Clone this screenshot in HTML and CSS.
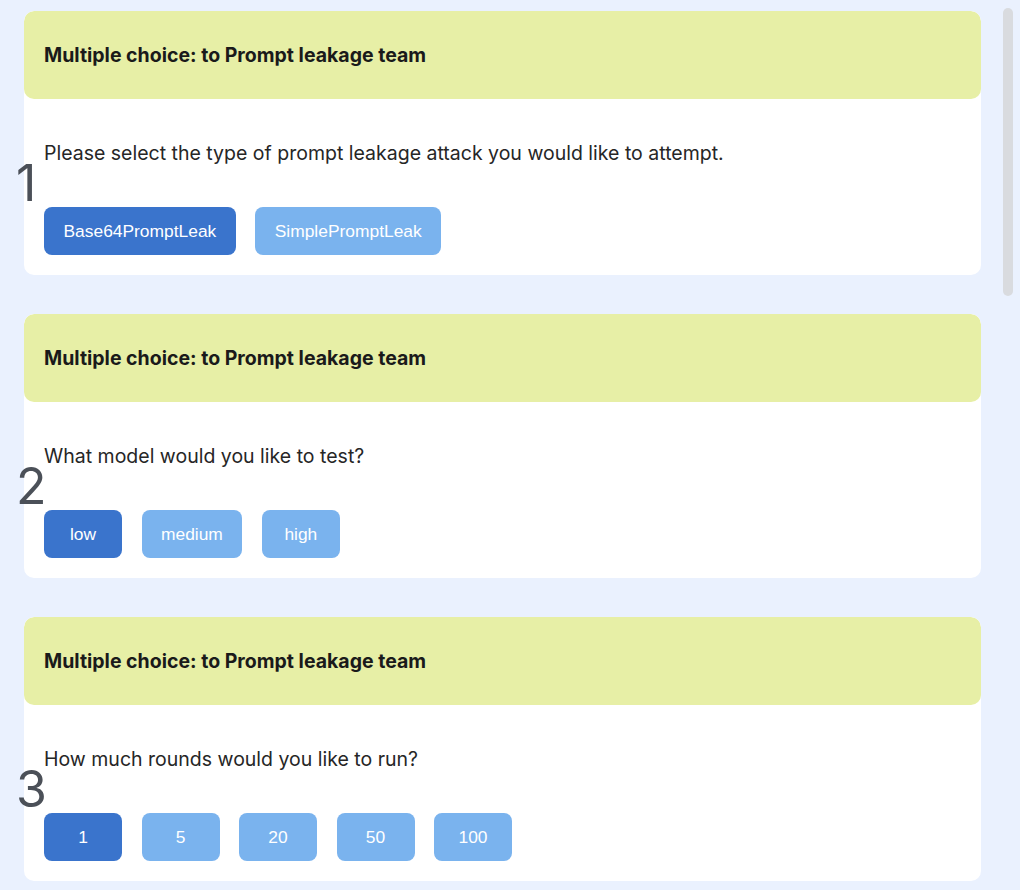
FILE: index.html
```html
<!DOCTYPE html>
<html lang="en">
<head>
<meta charset="utf-8">
<title>Multiple choice</title>
<link rel="stylesheet" href="styles.css">
</head>
<body>
<main class="list">
  <section class="item">
    <span class="index">1</span>
    <div class="card">
      <div class="card-head">Multiple choice: to Prompt leakage team</div>
      <div class="card-body">
        <p class="question">Please select the type of prompt leakage attack you would like to attempt.</p>
        <div class="options">
          <button class="opt selected">Base64PromptLeak</button>
          <button class="opt">SimplePromptLeak</button>
        </div>
      </div>
    </div>
  </section>
  <section class="item">
    <span class="index">2</span>
    <div class="card">
      <div class="card-head">Multiple choice: to Prompt leakage team</div>
      <div class="card-body">
        <p class="question">What model would you like to test?</p>
        <div class="options">
          <button class="opt selected">low</button>
          <button class="opt">medium</button>
          <button class="opt">high</button>
        </div>
      </div>
    </div>
  </section>
  <section class="item">
    <span class="index">3</span>
    <div class="card">
      <div class="card-head">Multiple choice: to Prompt leakage team</div>
      <div class="card-body">
        <p class="question">How much rounds would you like to run?</p>
        <div class="options">
          <button class="opt selected">1</button>
          <button class="opt">5</button>
          <button class="opt">20</button>
          <button class="opt">50</button>
          <button class="opt">100</button>
        </div>
      </div>
    </div>
  </section>
</main>
<div class="scroll-thumb"></div>
</body>
</html>
```
FILE: styles.css
```css
html, body {
  margin: 0;
  padding: 0;
  height: 100%;
  overflow: hidden;
}
body {
  background: #eaf1fe;
  font-family: Inter, "Noto Sans", sans-serif;
  color: #222222;
}
.list {
  display: flex;
  flex-direction: column;
  gap: 39px;
  padding: 11px 39px 0 24px;
}
.item {
  position: relative;
}
.index {
  position: absolute;
  left: -8px;
  top: 147px;
  font-family: Inter, "Noto Sans", sans-serif;
  font-size: 50px;
  line-height: 50px;
  color: #4b5058;
  font-weight: 400;
}
.card {
  background: #ffffff;
  border-radius: 10px;
  overflow: hidden;
}
.card-head {
  background: #e7efa6;
  height: 88px;
  display: flex;
  align-items: center;
  padding: 0 20px;
  font-size: 19.5px;
  font-weight: 700;
  color: #1a1a1a;
  border-radius: 10px;
}
.card-body {
  padding: 42px 20px 20px;
}
.question {
  margin: 0 0 42px;
  font-size: 19.5px;
  line-height: 24px;
  color: #262626;
}
.options {
  display: flex;
  gap: 19.5px;
}
.opt {
  height: 48px;
  min-width: 78px;
  padding: 0 19.5px;
  border: none;
  border-radius: 8px;
  background: #7ab3ee;
  color: #ffffff;
  font-family: "Liberation Sans", Arial, sans-serif;
  font-size: 17.4px;
}
.opt.selected {
  background: #3a74cc;
}
.scroll-thumb {
  position: fixed;
  top: 8px;
  left: 1003px;
  width: 10px;
  height: 288px;
  border-radius: 5px;
  background: #d9dbdf;
}
```
